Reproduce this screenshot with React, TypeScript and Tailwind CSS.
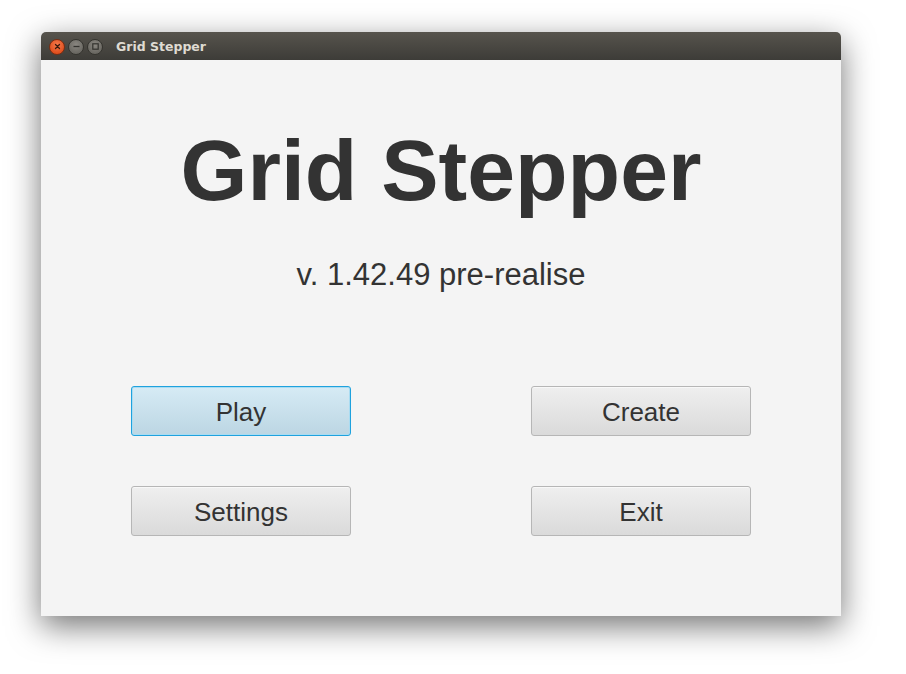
import React from "react";

const TitleButton: React.FC<{ kind: "close" | "min" | "max" }> = ({ kind }) => {
  const bg =
    kind === "close"
      ? "bg-[radial-gradient(circle_at_50%_35%,#f47a4c,#e0501f_70%)] border-[#7a2d12]"
      : "bg-[radial-gradient(circle_at_50%_35%,#8a8781,#6b6963_70%)] border-[#35342f]";
  return (
    <div
      className={`w-[16px] h-[16px] rounded-full border ${bg} flex items-center justify-center`}
    >
      <svg width="9" height="9" viewBox="0 0 9 9">
        {kind === "close" && (
          <path
            d="M2.5 2.5 L6.5 6.5 M6.5 2.5 L2.5 6.5"
            stroke="#3b1a0c"
            strokeWidth="1.3"
            strokeLinecap="round"
          />
        )}
        {kind === "min" && (
          <path d="M1.5 4.5 H7.5" stroke="#34332f" strokeWidth="1.3" />
        )}
        {kind === "max" && (
          <rect
            x="1.8"
            y="1.8"
            width="5.4"
            height="5.4"
            fill="none"
            stroke="#34332f"
            strokeWidth="1.2"
          />
        )}
      </svg>
    </div>
  );
};

const MenuButton: React.FC<{ label: string; focused?: boolean }> = ({
  label,
  focused,
}) => {
  const look = focused
    ? "border-[#1fa2de] bg-gradient-to-b from-[#d6ebf5] to-[#bcd6e3] shadow-[inset_0_0_0_1px_#a9dcf2]"
    : "border-[#b6b6b6] bg-gradient-to-b from-[#efefef] to-[#dadada] shadow-[inset_0_1px_0_#f8f8f8]";
  return (
    <button
      className={`w-[220px] h-[50px] rounded-[3px] border ${look} flex items-center justify-center pt-[1px] text-[26px] leading-none text-[#333333]`}
      style={{ fontFamily: '"Liberation Sans", Arial, sans-serif' }}
    >
      {label}
    </button>
  );
};

export default function App() {
  return (
    <div className="w-[906px] h-[674px] bg-white overflow-hidden">
      <div className="ml-[41px] mt-[32px] w-[800px] h-[584px] flex flex-col rounded-t-[5px] shadow-[0_10px_32px_rgba(0,0,0,0.55)]">
        <div className="h-[28px] rounded-t-[5px] bg-gradient-to-b from-[#57544d] to-[#3d3c38] flex items-center pl-[8px] pt-[1px]">
          <div className="flex items-center gap-[3px]">
            <TitleButton kind="close" />
            <TitleButton kind="min" />
            <TitleButton kind="max" />
          </div>
          <span
            className="ml-[13px] pt-[2px] text-[12.5px] font-bold text-[#dfdbd2]"
            style={{ fontFamily: '"DejaVu Sans", sans-serif' }}
          >
            Grid Stepper
          </span>
        </div>
        <div
          className="flex-1 bg-[#f4f4f4] flex flex-col items-center pt-[67px] text-[#333333]"
          style={{ fontFamily: '"Liberation Sans", Arial, sans-serif' }}
        >
          <h1 className="text-[86px] leading-none font-bold">Grid Stepper</h1>
          <p className="mt-[46px] text-[31px] leading-none">
            v. 1.42.49 pre-realise
          </p>
          <div className="mt-[96px] grid grid-cols-[220px_220px] gap-x-[180px] gap-y-[50px]">
            <MenuButton label="Play" focused />
            <MenuButton label="Create" />
            <MenuButton label="Settings" />
            <MenuButton label="Exit" />
          </div>
        </div>
      </div>
    </div>
  );
}
